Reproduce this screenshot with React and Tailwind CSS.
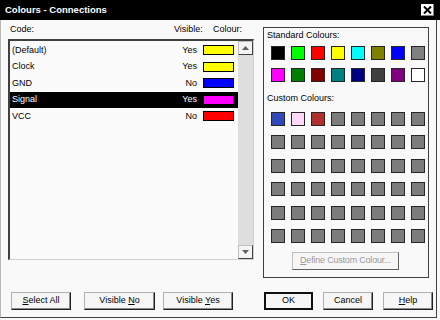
import React from "react";

const font = { fontFamily: '"Liberation Sans", Arial, sans-serif' };

const rows = [
  { name: "(Default)", vis: "Yes", color: "bg-[#ffff00]" },
  { name: "Clock", vis: "Yes", color: "bg-[#ffff00]" },
  { name: "GND", vis: "No", color: "bg-[#0000ff]" },
  { name: "Signal", vis: "Yes", color: "bg-[#ff00ff]", sel: true },
  { name: "VCC", vis: "No", color: "bg-[#ff0000]" },
];

const standard = [
  "bg-[#000000]", "bg-[#00ff00]", "bg-[#ff0000]", "bg-[#ffff00]", "bg-[#00ffff]", "bg-[#808000]", "bg-[#0000ff]", "bg-[#808080]",
  "bg-[#ff00ff]", "bg-[#008000]", "bg-[#800000]", "bg-[#008080]", "bg-[#000080]", "bg-[#404040]", "bg-[#800080]", "bg-[#ffffff]",
];

const custom = [
  "bg-[#3048b8]", "bg-[#ffd8f8]", "bg-[#b03030]",
  ...Array(45).fill("bg-[#7c7c7c]"),
];

function Swatch({ c }) {
  return <div className={`w-[14px] h-[14px] border border-[#262626] ${c}`} />;
}

function Btn({ children, w, def }) {
  return (
    <div
      className={`${w} h-[18px] flex items-center justify-center text-[9px] text-black bg-[#f6f6f6] ${
        def
          ? "border-2 border-[#101010]"
          : "border border-[#b0b0b0] border-r-[#202020] border-b-[#202020] shadow-[inset_-1px_-1px_0_#8a8a8a]"
      }`}
    >
      {children}
    </div>
  );
}

export default function App() {
  return (
    <div className="w-[440px] h-[320px] bg-[#f9f9f9] overflow-hidden" style={font}>
      {/* Title bar */}
      <div className="h-[20px] bg-black flex items-center justify-between pl-[5px]">
        <span className="text-white font-bold text-[9.5px] leading-none">Colours - Connections</span>
        <div className="w-[13px] h-[12px] mr-[6px] bg-white border-r border-b border-[#808080] flex items-center justify-center">
          <svg width="9" height="8" viewBox="0 0 9 8">
            <path d="M1 0.5 L8 7.5 M8 0.5 L1 7.5" stroke="#000" strokeWidth="2" />
          </svg>
        </div>
      </div>

      {/* Body */}
      <div className="w-[437px] h-[298px] border-l border-r border-b border-[#b8b8b8] border-r-[#404040] border-b-[#404040] px-[7px] flex flex-col">
        <div className="flex h-[258px] items-start">
          {/* Left column */}
          <div className="w-[246px] flex flex-col">
            <div className="h-[19px] flex items-center text-[9px] text-black">
              <span className="w-[166px] pl-[2px]">Code:</span>
              <span className="w-[39px]">Visible:</span>
              <span>Colour:</span>
            </div>
            <div className="h-[221px] flex border-t-2 border-l-2 border-[#404040] border-r border-b border-r-[#d0d0d0] border-b-[#d0d0d0] bg-[#fbfbfb]">
              <div className="w-[228px] flex flex-col pt-[1px]">
                {rows.map((r) => (
                  <div
                    key={r.name}
                    className={`h-[16.5px] flex items-center text-[9px] ${
                      r.sel ? "bg-black text-white" : "text-black"
                    }`}
                  >
                    <span className="flex-1 pl-[2px]">{r.name}</span>
                    <span>{r.vis}</span>
                    <div className={`ml-[6px] mr-[4px] w-[31px] h-[10px] border border-black ${r.color}`} />
                  </div>
                ))}
              </div>
              <div className="w-[15px] flex flex-col justify-between bg-[#dedede]">
                <div className="h-[14px] bg-[#f4f4f4] border border-[#c0c0c0] border-r-[#404040] border-b-[#404040] flex items-center justify-center">
                  <svg width="7" height="4" viewBox="0 0 7 4">
                    <path d="M3.5 0 L7 4 L0 4 Z" fill="#606060" />
                  </svg>
                </div>
                <div className="h-[14px] bg-[#f4f4f4] border border-[#c0c0c0] border-r-[#404040] border-b-[#404040] flex items-center justify-center">
                  <svg width="7" height="4" viewBox="0 0 7 4">
                    <path d="M0 0 L7 0 L3.5 4 Z" fill="#606060" />
                  </svg>
                </div>
              </div>
            </div>
          </div>

          {/* Right group */}
          <div className="ml-[9px] mt-[7px] w-[169px] h-[251px] border border-[#404040] flex flex-col text-[9px] text-black">
            <div className="mt-[2px] pl-[3px] leading-[11px]">Standard Colours:</div>
            <div className="mt-[5px] pl-[7px] grid grid-cols-[repeat(8,14px)] gap-x-[6px] gap-y-[8px]">
              {standard.map((c, i) => (
                <Swatch key={i} c={c} />
              ))}
            </div>
            <div className="mt-[11px] pl-[3px] leading-[11px]">Custom Colours:</div>
            <div className="mt-[8px] pl-[7px] grid grid-cols-[repeat(8,14px)] gap-x-[6px] gap-y-[9.4px]">
              {custom.map((c, i) => (
                <Swatch key={i} c={c} />
              ))}
            </div>
            <div className="mt-[9px] ml-[28px] w-[107px] h-[18px] flex items-center justify-center text-[#9a9a9a] bg-[#f6f6f6] border border-[#c0c0c0] border-r-[#606060] border-b-[#606060] tracking-[-0.2px]">
              <span><u>D</u>efine Custom Colour...</span>
            </div>
          </div>
        </div>

        {/* Buttons */}
        <div className="mt-[14px] flex items-center">
          <div className="ml-[3px]">
            <Btn w="w-[60px]"><span><u>S</u>elect All</span></Btn>
          </div>
          <div className="ml-[13px]">
            <Btn w="w-[71px]"><span>Visible <u>N</u>o</span></Btn>
          </div>
          <div className="ml-[8px]">
            <Btn w="w-[70px]"><span>Visible <u>Y</u>es</span></Btn>
          </div>
          <div className="ml-[31px]">
            <Btn w="w-[49px]" def>OK</Btn>
          </div>
          <div className="ml-[10px]">
            <Btn w="w-[50px]">Cancel</Btn>
          </div>
          <div className="ml-[10px]">
            <Btn w="w-[50px]"><span><u>H</u>elp</span></Btn>
          </div>
        </div>
      </div>
    </div>
  );
}
